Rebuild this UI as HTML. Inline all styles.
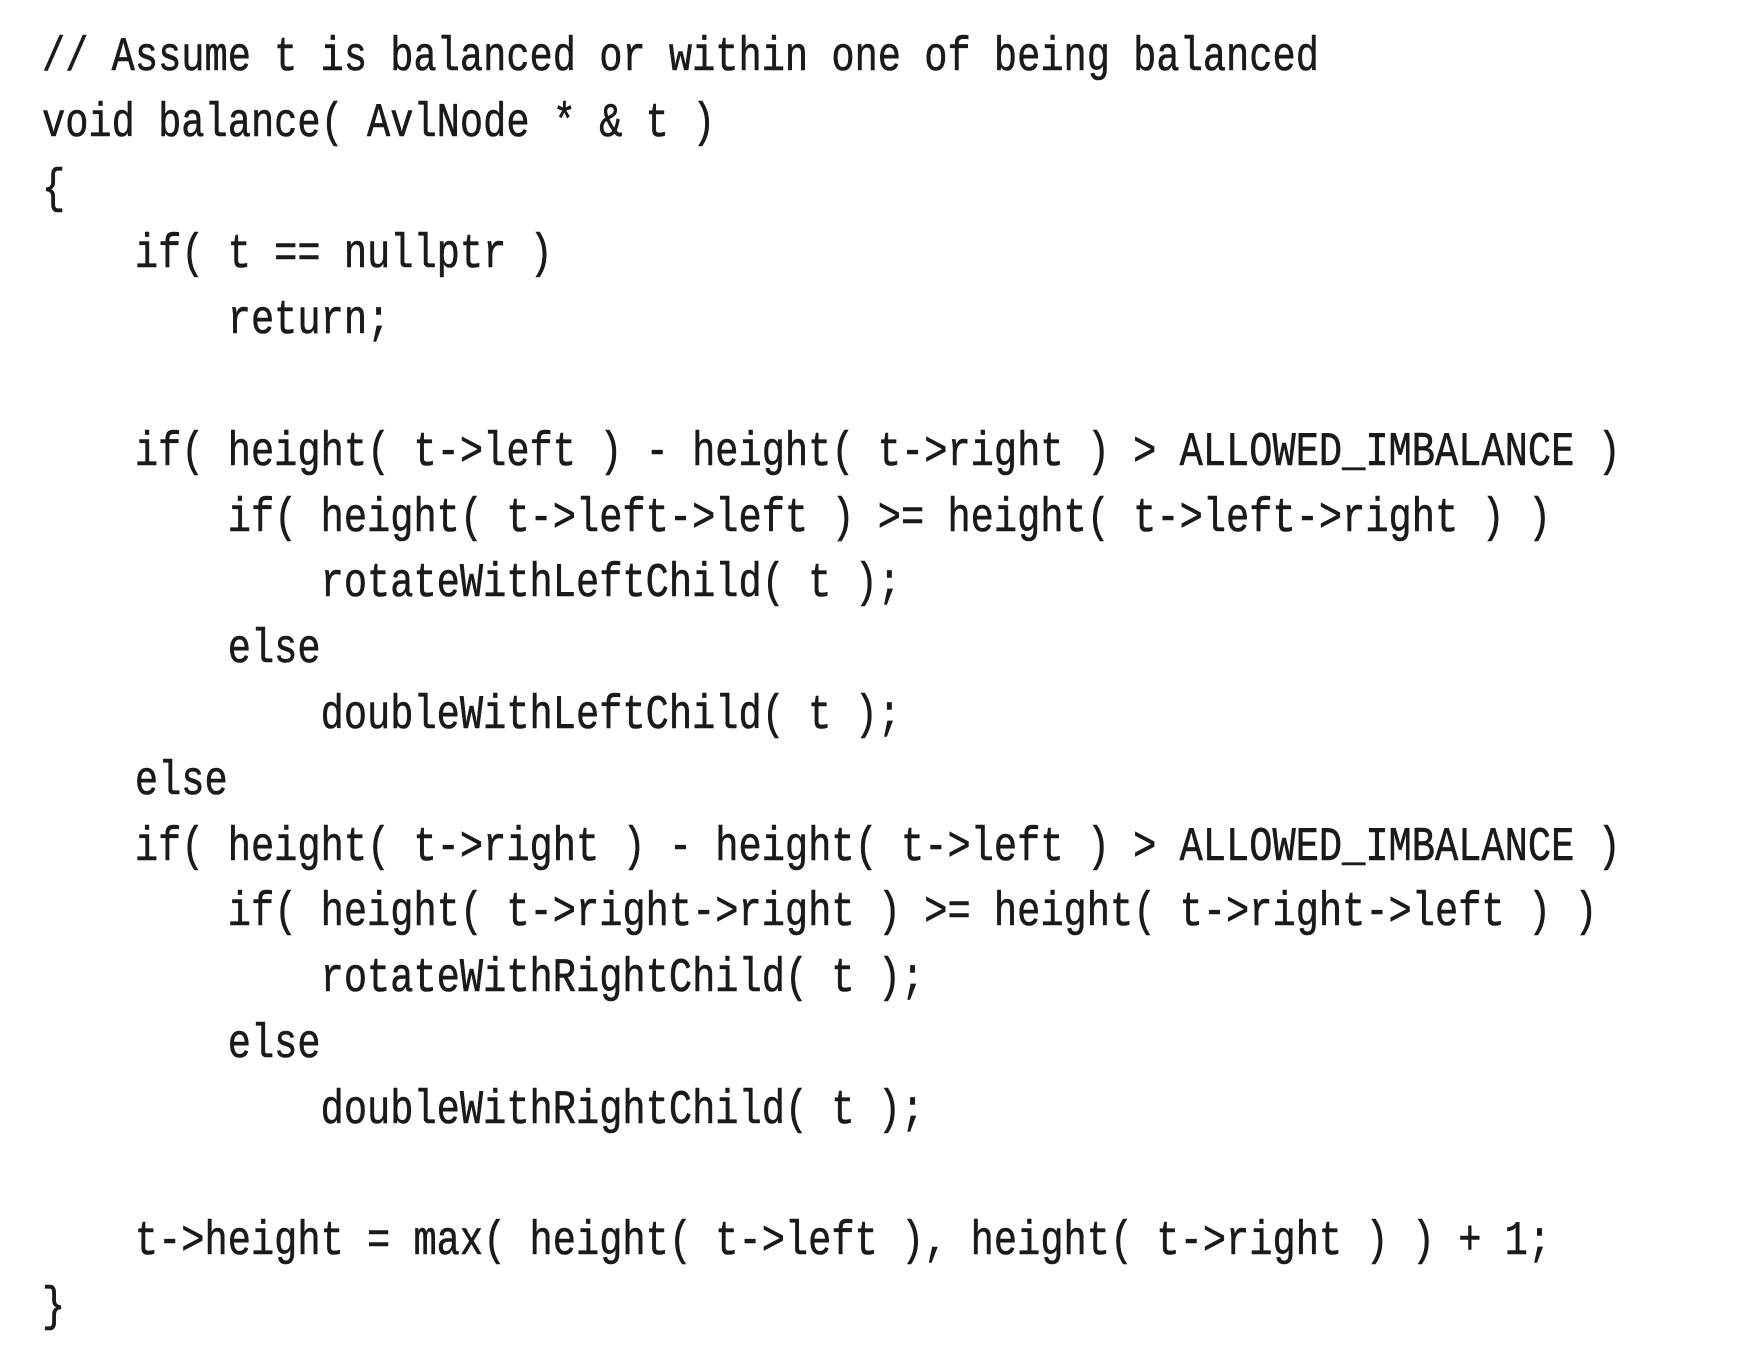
<!DOCTYPE html>
<html><head><meta charset="utf-8"><style>
html,body{margin:0;padding:0;background:#fff;width:1762px;height:1346px;overflow:hidden;}
pre{position:absolute;left:42px;top:26px;margin:0;font-family:"Liberation Mono",monospace;font-size:48px;line-height:65.8px;color:#1a1a1a;transform:scaleX(0.806);transform-origin:0 0;white-space:pre;-webkit-text-stroke:0.6px #1a1a1a;}
</style></head><body>
<pre>// Assume t is balanced or within one of being balanced
void balance( AvlNode * &amp; t )
{
    if( t == nullptr )
        return;

    if( height( t-&gt;left ) - height( t-&gt;right ) &gt; ALLOWED_IMBALANCE )
        if( height( t-&gt;left-&gt;left ) &gt;= height( t-&gt;left-&gt;right ) )
            rotateWithLeftChild( t );
        else
            doubleWithLeftChild( t );
    else
    if( height( t-&gt;right ) - height( t-&gt;left ) &gt; ALLOWED_IMBALANCE )
        if( height( t-&gt;right-&gt;right ) &gt;= height( t-&gt;right-&gt;left ) )
            rotateWithRightChild( t );
        else
            doubleWithRightChild( t );

    t-&gt;height = max( height( t-&gt;left ), height( t-&gt;right ) ) + 1;
}</pre>
</body></html>
